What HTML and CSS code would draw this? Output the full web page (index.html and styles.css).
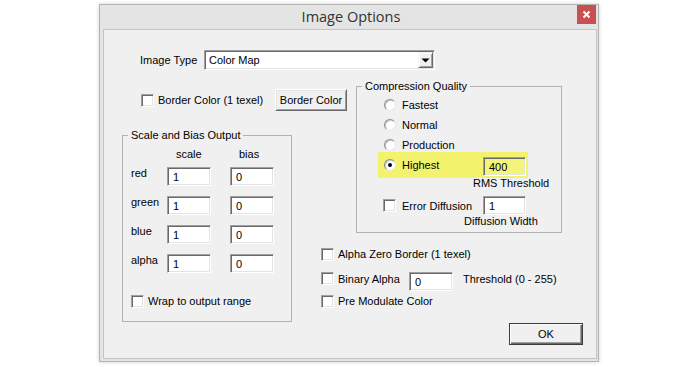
FILE: index.html
```html
<!DOCTYPE html>
<html>
<head>
<meta charset="utf-8">
<title>Image Options</title>
<link rel="stylesheet" href="styles.css">
</head>
<body>
<div class="window">
  <div class="titlebar">
    <span class="tb-spacer"></span>
    <span class="title">Image Options</span>
    <span class="close"><svg width="19" height="19" viewBox="0 0 19 19"><path d="M6.5 6.5 L12.5 12.5 M12.5 6.5 L6.5 12.5" stroke="#fff" stroke-width="2"/></svg></span>
  </div>
  <div class="client">
    <div class="type-row">
      <span class="type-label">Image Type</span>
      <div class="select">
        <span class="select-text">Color Map</span>
        <span class="drop"><svg width="13" height="14" viewBox="0 0 13 14"><path d="M2.5 5.5 H10.5 L6.5 9.5 Z" fill="#000"/></svg></span>
      </div>
    </div>
    <div class="main">
      <div class="border-row">
        <label class="check border-check"><span class="box"></span>Border Color (1 texel)</label>
        <span class="btn">Border Color</span>
      </div>

      <fieldset class="group compression">
        <legend>Compression Quality</legend>
        <label class="radio-row"><span class="radio"></span>Fastest</label>
        <label class="radio-row"><span class="radio"></span>Normal</label>
        <label class="radio-row"><span class="radio"></span>Production</label>
        <div class="radio-row highlight"><span class="radio checked"></span>Highest<span class="field hl-field">400</span></div>
        <div class="caption rms">RMS Threshold</div>
        <div class="ed-row"><span class="box"></span><span class="ed-label">Error Diffusion</span><span class="field ed-field">1</span></div>
        <div class="caption dw">Diffusion Width</div>
      </fieldset>

      <fieldset class="group scale">
        <legend>Scale and Bias Output</legend>
        <div class="sb-body">
          <div class="sb-head"><span></span><span>scale</span><span>bias</span></div>
          <div class="sb-grid">
            <span class="sb-label">red</span><span class="field">1</span><span class="field">0</span>
            <span class="sb-label">green</span><span class="field">1</span><span class="field">0</span>
            <span class="sb-label">blue</span><span class="field">1</span><span class="field">0</span>
            <span class="sb-label">alpha</span><span class="field">1</span><span class="field">0</span>
          </div>
          <label class="check wrap"><span class="box"></span>Wrap to output range</label>
        </div>
      </fieldset>

      <div class="options">
        <label class="check"><span class="box"></span>Alpha Zero Border (1 texel)</label>
        <div class="binary-row"><span class="box"></span><span class="bin-label">Binary Alpha</span><span class="field bin-field">0</span><span class="thr">Threshold (0 - 255)</span></div>
        <label class="check premod"><span class="box"></span>Pre Modulate Color</label>
        <div class="ok-row"><span class="btn ok">OK</span></div>
      </div>
    </div>
  </div>
</div>
</body>
</html>
```
FILE: styles.css
```css
html, body {
  margin: 0;
  padding: 0;
  background: #ffffff;
}
body {
  width: 700px;
  height: 367px;
  overflow: hidden;
  font-family: "Liberation Sans", Arial, sans-serif;
  font-size: 11px;
  color: #000;
}
.window {
  margin: 4px 0 0 99px;
  width: 500px;
  height: 358px;
  box-sizing: border-box;
  border: 1px solid #b3b3b3;
  background: #e4e4e4;
  box-shadow: 0 0 4px rgba(0, 0, 0, 0.18);
  display: flex;
  flex-direction: column;
}
.titlebar {
  height: 24px;
  display: grid;
  grid-template-columns: 1fr auto 1fr;
  align-items: start;
}
.title {
  font-family: "Open Sans", "Noto Sans", sans-serif;
  font-size: 14.5px;
  line-height: 24px;
  color: #333;
  padding-left: 4px;
}
.close {
  justify-self: end;
  margin-right: 2px;
  width: 19px;
  height: 19px;
  background: #c75050;
  display: flex;
}
.client {
  margin: 0 1px 2px 3px;
  flex: 1;
  border: 1px solid #c4c4c4;
  background: #f0f0f0;
}
.type-row {
  margin-top: 20px;
  padding-left: 36px;
  display: flex;
  align-items: center;
}
.type-label {
  width: 64px;
}
.select {
  width: 231px;
  height: 20px;
  box-sizing: border-box;
  padding: 1px;
  background: #fff;
  border: 1px solid;
  border-color: #a0a0a0 #fff #fff #a0a0a0;
  box-shadow: inset 1px 1px 0 #696969, inset -1px -1px 0 #e3e3e3;
  display: flex;
}
.select-text {
  flex: 1;
  padding-left: 3px;
  line-height: 16px;
}
.drop {
  width: 15px;
  height: 16px;
  box-sizing: border-box;
  background: #f0f0f0;
  border: 1px solid;
  border-color: #f0f0f0 #696969 #696969 #f0f0f0;
  box-shadow: inset 1px 1px 0 #fff, inset -1px -1px 0 #a0a0a0;
  display: flex;
}
.main {
  margin: 10px 0 0 18px;
  display: grid;
  grid-template-columns: 170px 29px 26px 9px 227px;
  grid-template-rows: 31px 129px auto;
}
.border-row {
  grid-column: 1 / 4;
  grid-row: 1;
  padding: 9px 0 0 19px;
  display: flex;
  align-items: center;
}
.check {
  display: flex;
  align-items: center;
  line-height: 13px;
}
.border-check {
  width: 134px;
}
.box {
  width: 13px;
  height: 13px;
  box-sizing: border-box;
  flex: none;
  margin-right: 4px;
  background: #fff;
  border: 1px solid;
  border-color: #a0a0a0 #fff #fff #a0a0a0;
  box-shadow: inset 1px 1px 0 #696969, inset -1px -1px 0 #e3e3e3;
}
.btn {
  box-sizing: border-box;
  height: 22px;
  width: 72px;
  background: #f0f0f0;
  border: 1px solid;
  border-color: #fff #696969 #696969 #fff;
  box-shadow: inset 1px 1px 0 #e3e3e3, inset -1px -1px 0 #a0a0a0;
  display: flex;
  align-items: center;
  justify-content: center;
}
.field {
  width: 44px;
  height: 19px;
  box-sizing: border-box;
  background: #fff;
  border: 1px solid;
  border-color: #a0a0a0 #fff #fff #a0a0a0;
  box-shadow: inset 1px 1px 0 #696969, inset -1px -1px 0 #e3e3e3;
  padding-left: 5px;
  line-height: 18px;
  flex: none;
}
fieldset.group {
  margin: 0;
  padding: 0;
  min-width: 0;
  box-sizing: border-box;
  border: 1px solid #b2b2b2;
}
fieldset.group legend {
  padding: 0 3px;
  margin-left: 5px;
  line-height: 13px;
}
.compression {
  grid-column: 5;
  grid-row: 1 / 3;
  align-self: start;
  width: 206px;
  padding: 2px 0 4px 0 !important;
}
.radio-row {
  height: 20px;
  padding-left: 27px;
  display: flex;
  align-items: center;
  box-sizing: border-box;
}
.radio {
  width: 12px;
  height: 12px;
  box-sizing: border-box;
  border-radius: 50%;
  background: #fff;
  border: 1px solid;
  border-color: #8c8c8c #e6e6e6 #e6e6e6 #8c8c8c;
  box-shadow: inset 1px 1px 0 #c8c8c8;
  margin-right: 6px;
  flex: none;
  display: flex;
  align-items: center;
  justify-content: center;
}
.radio.checked::after {
  content: "";
  width: 4px;
  height: 4px;
  border-radius: 50%;
  background: #000;
}
.highlight {
  margin: -3px 0 0 21px;
  padding: 0 2px 0 6px;
  width: 150px;
  height: 26px;
  background: #f2f26c;
}
.hl-field {
  margin-left: auto;
  align-self: flex-start;
  margin-top: 5px;
  width: 43px;
  background: #f4f47a;
}
.caption {
  line-height: 13px;
}
.rms {
  margin-top: -1px;
  padding-left: 116px;
}
.ed-row {
  margin-top: 6px;
  height: 19px;
  padding-left: 26px;
  display: flex;
  align-items: center;
}
.ed-row .box {
  margin-right: 6px;
}
.ed-label {
  width: 81px;
}
.ed-field {
  width: 43px;
}
.dw {
  padding-left: 107px;
}
.scale {
  grid-column: 1;
  grid-row: 2 / 4;
  align-self: start;
  margin-top: 18px !important;
  width: 170px;
}
.sb-body {
  padding: 6px 0 13px 8px;
}
.sb-head {
  display: grid;
  grid-template-columns: 36px 63px 44px;
  line-height: 13px;
  margin-bottom: 6px;
}
.sb-head span {
  padding-left: 9px;
}
.sb-head span:first-child {
  padding-left: 0;
}
.sb-grid {
  display: grid;
  grid-template-columns: 36px 63px 44px;
  row-gap: 10px;
  align-items: start;
}
.sb-label {
  line-height: 13px;
}
.wrap {
  margin-top: 22px;
}
.options {
  grid-column: 3 / 6;
  grid-row: 3;
  padding-top: 8px;
}
.binary-row {
  margin-top: 11px;
  display: flex;
  align-items: flex-start;
  line-height: 13px;
}
.bin-label {
  width: 71px;
  padding-top: 1px;
}
.bin-field {
  width: 44px;
}
.thr {
  margin-left: 10px;
  padding-top: 1px;
}
.premod {
  margin-top: 4px;
}
.ok-row {
  margin-top: 15px;
  display: flex;
  justify-content: flex-end;
}
.btn.ok {
  width: 74px;
  height: 22px;
  border: 1px solid #3c3c3c;
  box-shadow: inset 1px 1px 0 #fff, inset -1px -1px 0 #696969, inset -2px -2px 0 #a0a0a0;
}
```
